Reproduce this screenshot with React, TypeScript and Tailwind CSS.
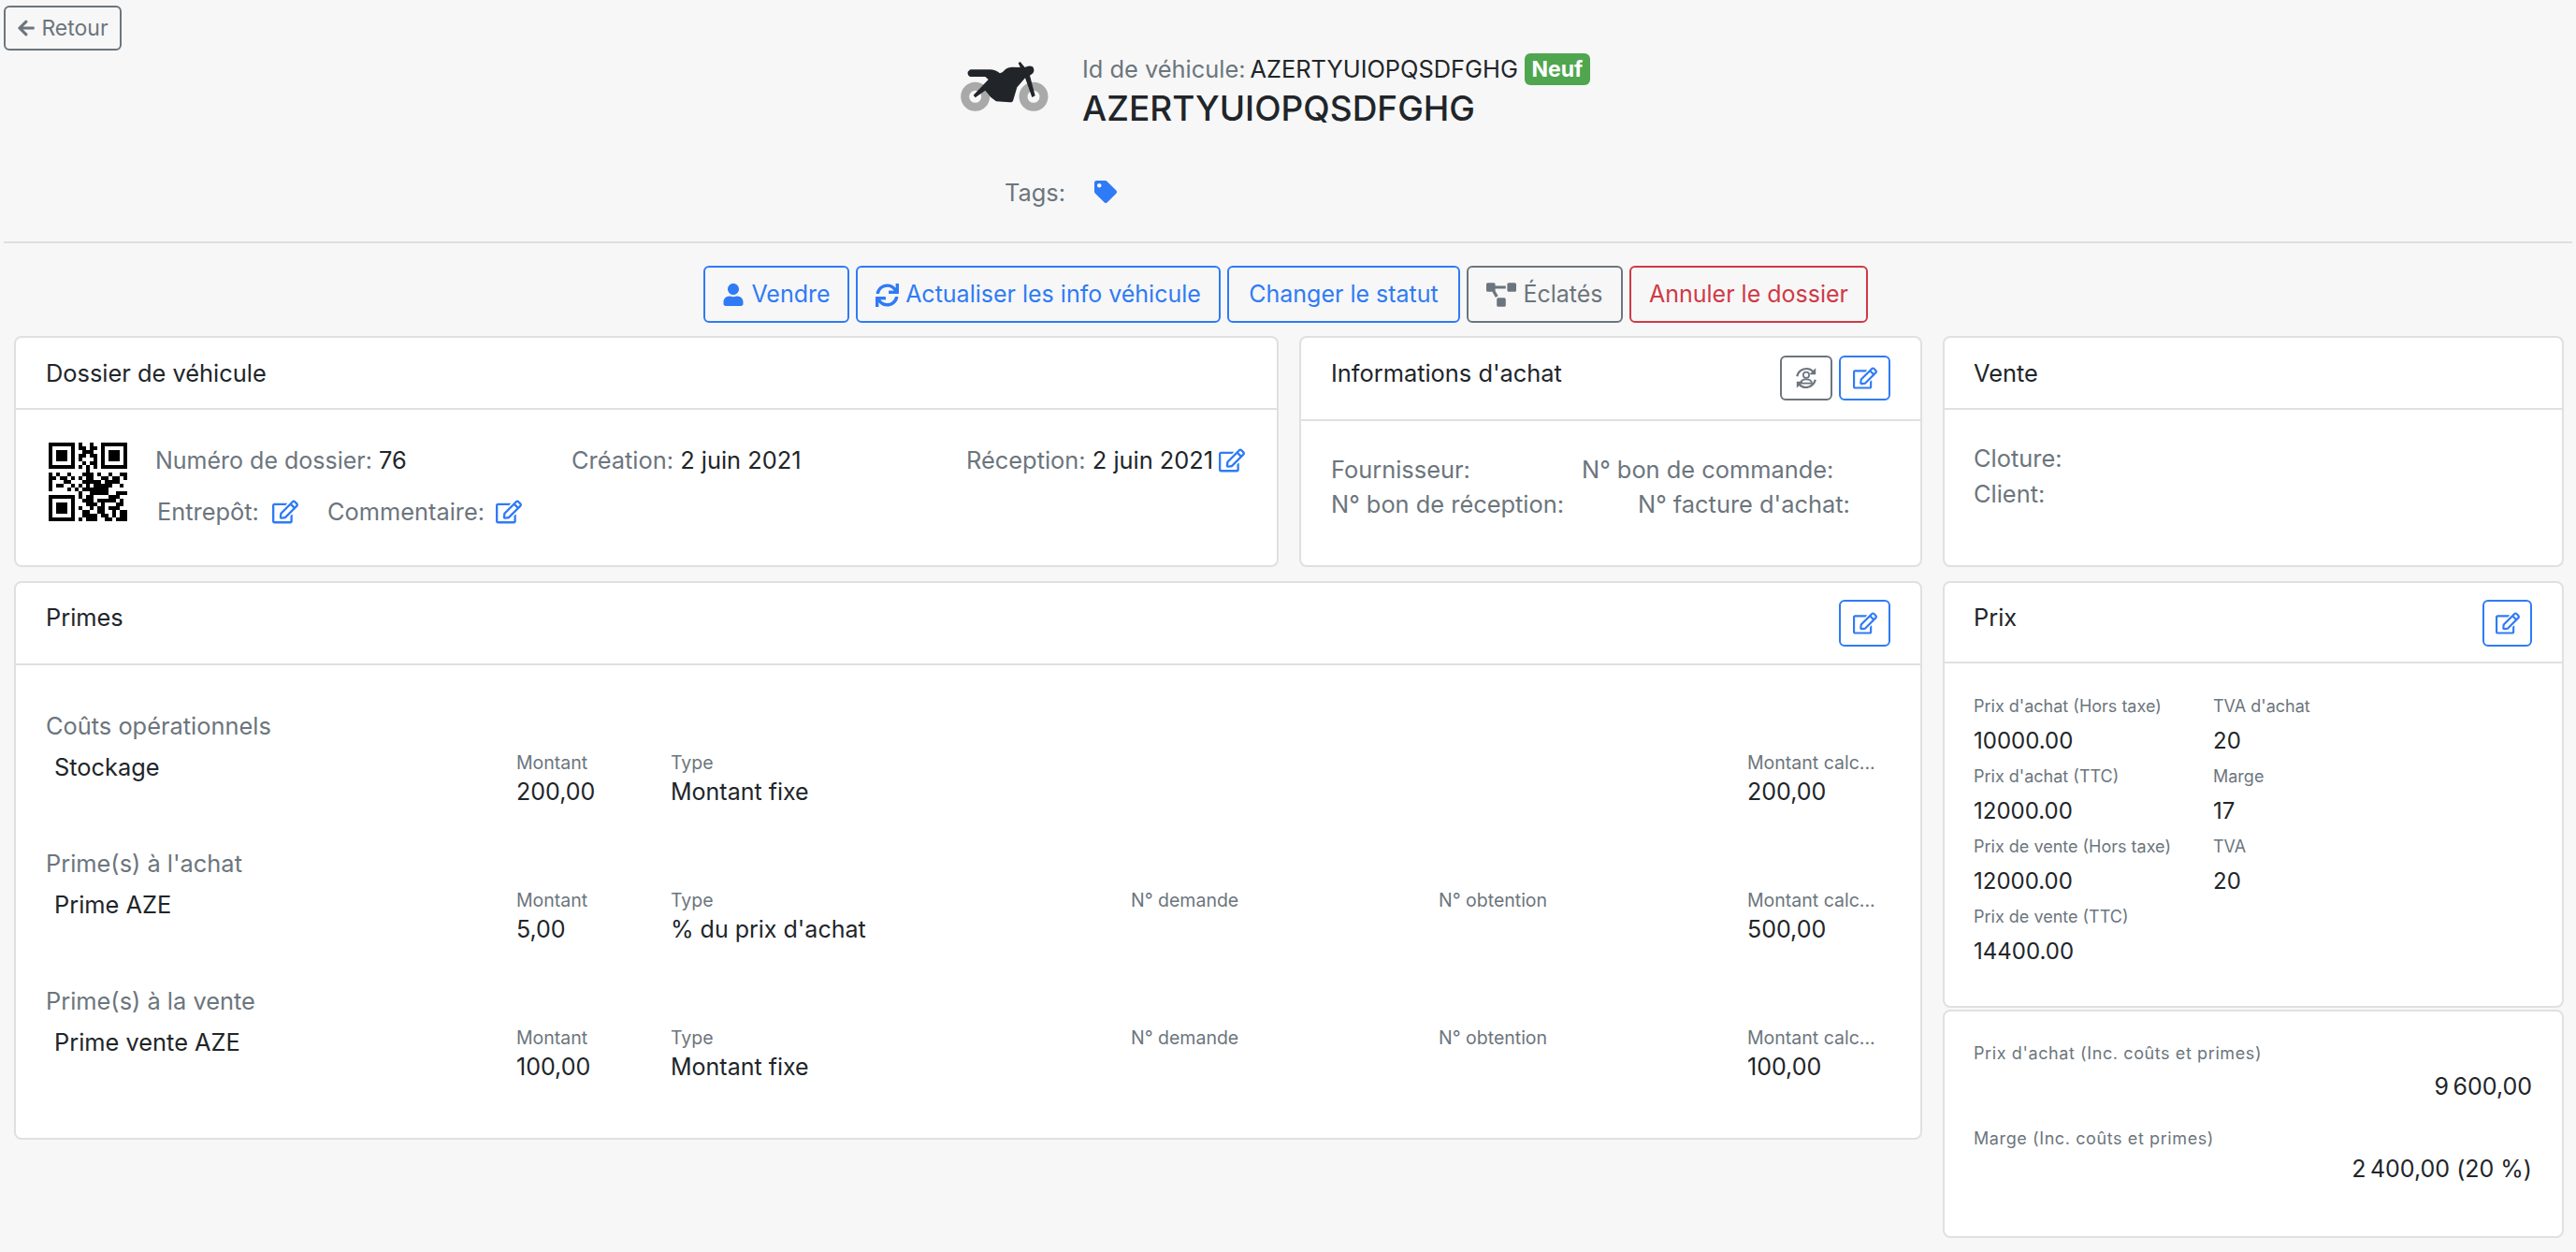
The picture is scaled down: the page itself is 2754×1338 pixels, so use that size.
import React from 'react';
import { FaArrowLeft, FaUser, FaSync, FaTag, FaRegEdit, FaProjectDiagram } from 'react-icons/fa';

const QR = [
    '111111101001001111111',
    '100000101101101000001',
    '101110100111001011101',
    '101110101101101011101',
    '101110101000101011101',
    '100000100101101000001',
    '111111101010101111111',
    '000000000010000000000',
    '101001000111010010011',
    '110110101011001101101',
    '100011000111110111100',
    '101100101010111110010',
    '100001010111111100000',
    '000000001001111100111',
    '111111101011000011100',
    '100000100111011111010',
    '101110100011101000110',
    '101110101001011011100',
    '101110100110011001011',
    '100000100111101101011',
    '111111101011100110111',
];

function QrCode() {
    return (
        <svg viewBox="0 0 21 21" className="w-[84px] h-[84px] shrink-0" shapeRendering="crispEdges">
            {QR.map((row, y) =>
                row.split('').map((c, x) => (c === '1' ? <rect key={`${x}-${y}`} x={x} y={y} width="1" height="1" fill="#000" /> : null))
            )}
        </svg>
    );
}

function Moto() {
    return (
        <svg viewBox="0 0 480 300" className="w-[160px] h-[100px]">
            <circle cx="128" cy="190" r="33" fill="none" stroke="#a9a9a9" strokeWidth="27" />
            <circle cx="315" cy="190" r="33" fill="none" stroke="#a9a9a9" strokeWidth="27" />
            <path
                fill="#212529"
                d="M112 103 L175 103 Q192 103 207 115 L216 111 Q226 96 245 95 L272 96 L266 82 L272 78 L287 96 Q300 88 312 94 Q320 105 313 115 L303 122 L320 187 L310 192 L288 130 L262 160 L250 200 Q248 209 238 208 L195 205 L178 192 L160 170 L128 193 L122 185 L170 135 L160 126 L112 126 Q102 122 104 110 Z"
            />
        </svg>
    );
}

// refresh arrows around a small person
function UserSync() {
    return (
        <svg viewBox="0 0 28 28" className="w-[26px] h-[26px]" fill="none" stroke="currentColor" strokeWidth="2.4">
            <path d="M3.5 12 A11 11 0 0 1 22 6.5" />
            <path d="M24.5 16 A11 11 0 0 1 6 21.5" />
            <path d="M25 2.5 V10 H17.5 Z" fill="currentColor" stroke="none" />
            <path d="M3 25.5 V18 H10.5 Z" fill="currentColor" stroke="none" />
            <circle cx="14" cy="10.5" r="3.4" strokeWidth="1.8" />
            <path d="M7.5 20 Q8 15.5 14 15.5 Q20 15.5 20.5 20 Z" strokeWidth="1.8" />
        </svg>
    );
}

function IconBtn({ children, gray, className = 'w-[55px] h-[50px]' }: { children: React.ReactNode; gray?: boolean; className?: string }) {
    return (
        <button className={`${className} flex items-center justify-center rounded-[6px] border-2 bg-white ${gray ? 'border-[#6c757d] text-[#6c757d]' : 'border-[#2f7bf5] text-[#2f7bf5]'}`}>
            {children}
        </button>
    );
}

function EditIcon({ className = 'w-[28px] h-[28px]' }: { className?: string }) {
    return <FaRegEdit className={`${className} text-[#2f7bf5]`} />;
}

function ActionBtn({ children, color, width }: { children: React.ReactNode; color: string; width: string }) {
    return (
        <button className={`${width} ${color} h-[61px] pt-[1px] flex items-center justify-center gap-[7px] rounded-[6px] border-2 text-[25px]`}>
            {children}
        </button>
    );
}

function Label({ children }: { children: React.ReactNode }) {
    return <span className="text-[#6c757d]">{children}</span>;
}

function Card({ className, children }: { className: string; children: React.ReactNode }) {
    return <div className={`bg-white border-2 border-[#e0e0e0] rounded-[8px] ${className}`}>{children}</div>;
}

function CardHeader({ title, height, actions, compact, left = 'pl-[32px]' }: { title: string; height: string; actions?: React.ReactNode; compact?: boolean; left?: string }) {
    return (
        <div className={`${height} ${left} border-b-2 border-[#e0e0e0] flex justify-between pr-[32px]`}>
            <h3 className={`text-[25.4px] leading-[38px] text-[#212529] ${compact ? 'pt-[18px]' : 'pt-[19px]'}`}>{title}</h3>
            {actions && <div className={`flex gap-[7px] ${compact ? 'pt-[18px]' : 'pt-[19px]'}`}>{actions}</div>}
        </div>
    );
}

function Small({ label, value }: { label: string; value: string }) {
    return (
        <div>
            <div className="text-[18px] leading-[26px] text-[#6c757d]">{label}</div>
            <div className="text-[24px] leading-[34px] mt-[7px] text-[#212529]">{value}</div>
        </div>
    );
}

function PrimeRow({ name, montant, type, calc, extra }: { name: string; montant: string; type: string; calc: string; extra?: boolean }) {
    return (
        <div className="grid grid-cols-[503px_165px_492px_329px_330px_1fr] h-[62px]">
            <div className="pl-[9px] text-[25.4px] leading-[38px] pt-[3px] text-[#212529]">{name}</div>
            <Field label="Montant" value={montant} />
            <Field label="Type" value={type} />
            <div className="text-[19.5px] leading-[26px] pt-[4px] text-[#6c757d]">{extra ? 'N° demande' : ''}</div>
            <div className="text-[19.5px] leading-[26px] pt-[4px] text-[#6c757d]">{extra ? 'N° obtention' : ''}</div>
            <Field label="Montant calc..." value={calc} />
        </div>
    );
}

function Field({ label, value }: { label: string; value: string }) {
    return (
        <div className="pt-[4px]">
            <div className="text-[19.5px] leading-[26px] text-[#6c757d] whitespace-nowrap">{label}</div>
            <div className="text-[25px] leading-[34px] mt-[1px] text-[#212529]">{value}</div>
        </div>
    );
}

export default function App() {
    return (
        <div className="min-h-[1338px] bg-[#f7f7f7] text-[25.4px] text-[#212529] font-['Inter',sans-serif]">
            {/* Header */}
            <div className="h-[260px] mx-[4px] border-b-2 border-[#dedede]">
                <div className="pt-[6px]">
                    <button className="w-[126px] h-[48px] flex items-center justify-center gap-[6px] rounded-[6px] border-2 border-[#6c757d] text-[#6c757d] text-[23px]">
                        <FaArrowLeft className="w-[20px] h-[20px]" />
                        Retour
                    </button>
                </div>
                <div className="flex pl-[996px] mt-[-8px]">
                    <div className="mt-[-6px]">
                        <Moto />
                    </div>
                    <div className="ml-[-3px]">
                        <div className="flex items-center h-[38px] gap-[7px] mt-[9px]">
                            <span className="text-[#6c757d]">Id de véhicule:</span>
                            <span className="ml-[-2px]">AZERTYUIOPQSDFGHG</span>
                            <span className="h-[34px] w-[70px] flex items-center justify-center rounded-[6px] bg-[#4fa64f] text-white text-[23px] font-bold">Neuf</span>
                        </div>
                        <h1 className="text-[37px] leading-[50px] mt-[-2px] font-medium">AZERTYUIOPQSDFGHG</h1>
                    </div>
                </div>
                <div className="flex items-center pl-[1070px] mt-[46px] h-[38px]">
                    <span className="text-[#6c757d]">Tags:</span>
                    <FaTag className="w-[24px] h-[24px] text-[#2f7bf5] ml-[31px] mt-[-2px]" />
                </div>
            </div>

            {/* Actions */}
            <div className="flex justify-center gap-[7px] pt-[24px] pr-[5px]">
                <ActionBtn color="border-[#2f7bf5] text-[#2f7bf5]" width="w-[156px]">
                    <FaUser className="w-[24px] h-[24px]" />
                    Vendre
                </ActionBtn>
                <ActionBtn color="border-[#2f7bf5] text-[#2f7bf5]" width="w-[390px]">
                    <FaSync className="w-[25px] h-[25px]" />
                    Actualiser les info véhicule
                </ActionBtn>
                <ActionBtn color="border-[#2f7bf5] text-[#2f7bf5]" width="w-[249px]">
                    Changer le statut
                </ActionBtn>
                <ActionBtn color="border-[#6c757d] text-[#6c757d]" width="w-[167px]">
                    <FaProjectDiagram className="w-[32px] h-[26px]" />
                    Éclatés
                </ActionBtn>
                <ActionBtn color="border-[#cf3a47] text-[#cf3a47]" width="w-[255px]">
                    Annuler le dossier
                </ActionBtn>
            </div>

            <div className="pl-[15px] pr-[13px] pt-[14px] flex flex-col gap-[15px]">
                {/* First row */}
                <div className="flex h-[247px]">
                    <Card className="w-[1352px] mr-[22px]">
                        <CardHeader title="Dossier de véhicule" height="h-[77px]" />
                        <div className="flex pl-[35px] pt-[35px]">
                            <QrCode />
                            <div className="flex-1 pl-[30px] pr-[32px]">
                                <div className="flex leading-[38px]">
                                    <div className="w-[445px]">
                                        <span className="text-[25px] text-[#6c757d]">Numéro de dossier:</span> 76
                                    </div>
                                    <div className="w-[422px]">
                                        <Label>Création:</Label> 2 juin 2021
                                    </div>
                                    <div className="flex items-center gap-[6px] whitespace-nowrap">
                                        <span>
                                            <Label>Réception:</Label> 2 juin 2021
                                        </span>
                                        <EditIcon />
                                    </div>
                                </div>
                                <div className="flex items-center leading-[38px] mt-[17px] pl-[2px]">
                                    <Label>Entrepôt:</Label>
                                    <EditIcon className="w-[28px] h-[28px] ml-[14px]" />
                                    <span className="ml-[31px] text-[#6c757d]">Commentaire:</span>
                                    <EditIcon className="w-[28px] h-[28px] ml-[12px]" />
                                </div>
                            </div>
                        </div>
                    </Card>
                    <Card className="w-[666px] mr-[22px]">
                        <CardHeader
                            title="Informations d'achat"
                            height="h-[89px]"
                            actions={
                                <>
                                    <IconBtn gray className="w-[56px] h-[48px]">
                                        <UserSync />
                                    </IconBtn>
                                    <IconBtn className="w-[55px] h-[48px]">
                                        <FaRegEdit className="w-[26px] h-[26px]" />
                                    </IconBtn>
                                </>
                            }
                        />
                        <div className="pl-[32px] pt-[33px] leading-[37px] text-[#6c757d]">
                            <div className="flex">
                                <span className="w-[268px]">Fournisseur:</span>
                                <span>N° bon de commande:</span>
                            </div>
                            <div className="flex">
                                <span className="w-[328px]">N° bon de réception:</span>
                                <span>N° facture d'achat:</span>
                            </div>
                        </div>
                    </Card>
                    <Card className="w-[664px]">
                        <CardHeader title="Vente" height="h-[77px]" left="pl-[31px]" />
                        <div className="pl-[31px] pt-[33px] leading-[38px] text-[#6c757d]">
                            <div>Cloture:</div>
                            <div>Client:</div>
                        </div>
                    </Card>
                </div>

                {/* Second row */}
                <div className="flex items-start">
                    <Card className="w-[2040px] h-[597px] mr-[22px]">
                        <CardHeader
                            title="Primes"
                            height="h-[88px]"
                            compact
                            actions={
                                <IconBtn>
                                    <FaRegEdit className="w-[26px] h-[26px]" />
                                </IconBtn>
                            }
                        />
                        <div className="pl-[32px] pt-[46px]">
                            <div className="text-[#6c757d] leading-[38px]">Coûts opérationnels</div>
                            <div className="mt-[3px]"><PrimeRow name="Stockage" montant="200,00" type="Montant fixe" calc="200,00" /></div>
                            <div className="text-[#6c757d] leading-[38px] mt-[44px]">Prime(s) à l'achat</div>
                            <div className="mt-[3px]"><PrimeRow name="Prime AZE" montant="5,00" type="% du prix d'achat" calc="500,00" extra /></div>
                            <div className="text-[#6c757d] leading-[38px] mt-[44px]">Prime(s) à la vente</div>
                            <div className="mt-[3px]"><PrimeRow name="Prime vente AZE" montant="100,00" type="Montant fixe" calc="100,00" extra /></div>
                        </div>
                    </Card>
                    <div className="w-[664px] flex flex-col gap-[2px]">
                        <Card className="h-[456px]">
                            <CardHeader
                                title="Prix"
                                height="h-[86px]"
                                compact
                                left="pl-[31px]"
                                actions={
                                    <IconBtn className="w-[53px] h-[50px]">
                                        <FaRegEdit className="w-[26px] h-[26px]" />
                                    </IconBtn>
                                }
                            />
                            <div className="grid grid-cols-[256px_1fr] pl-[31px] pt-[33px] gap-y-[8px]">
                                <Small label="Prix d'achat (Hors taxe)" value="10000.00" />
                                <Small label="TVA d'achat" value="20" />
                                <Small label="Prix d'achat (TTC)" value="12000.00" />
                                <Small label="Marge" value="17" />
                                <Small label="Prix de vente (Hors taxe)" value="12000.00" />
                                <Small label="TVA" value="20" />
                                <Small label="Prix de vente (TTC)" value="14400.00" />
                            </div>
                        </Card>
                        <Card className="h-[244px] pl-[31px] pr-[32px] pt-[32px] tracking-[0.6px]">
                            <div className="text-[18px] leading-[26px] h-[24px] overflow-hidden text-[#6c757d]">Prix d'achat (Inc. coûts et primes)</div>
                            <div className="text-right text-[25px] leading-[34px] mt-[7px]">9{'\u202f'}600,00</div>
                            <div className="text-[18px] leading-[26px] h-[24px] overflow-hidden text-[#6c757d] mt-[26px]">Marge (Inc. coûts et primes)</div>
                            <div className="text-right text-[25px] leading-[34px] mt-[4px]">2{'\u202f'}400,00 (20 %)</div>
                        </Card>
                    </div>
                </div>
            </div>
        </div>
    );
}
